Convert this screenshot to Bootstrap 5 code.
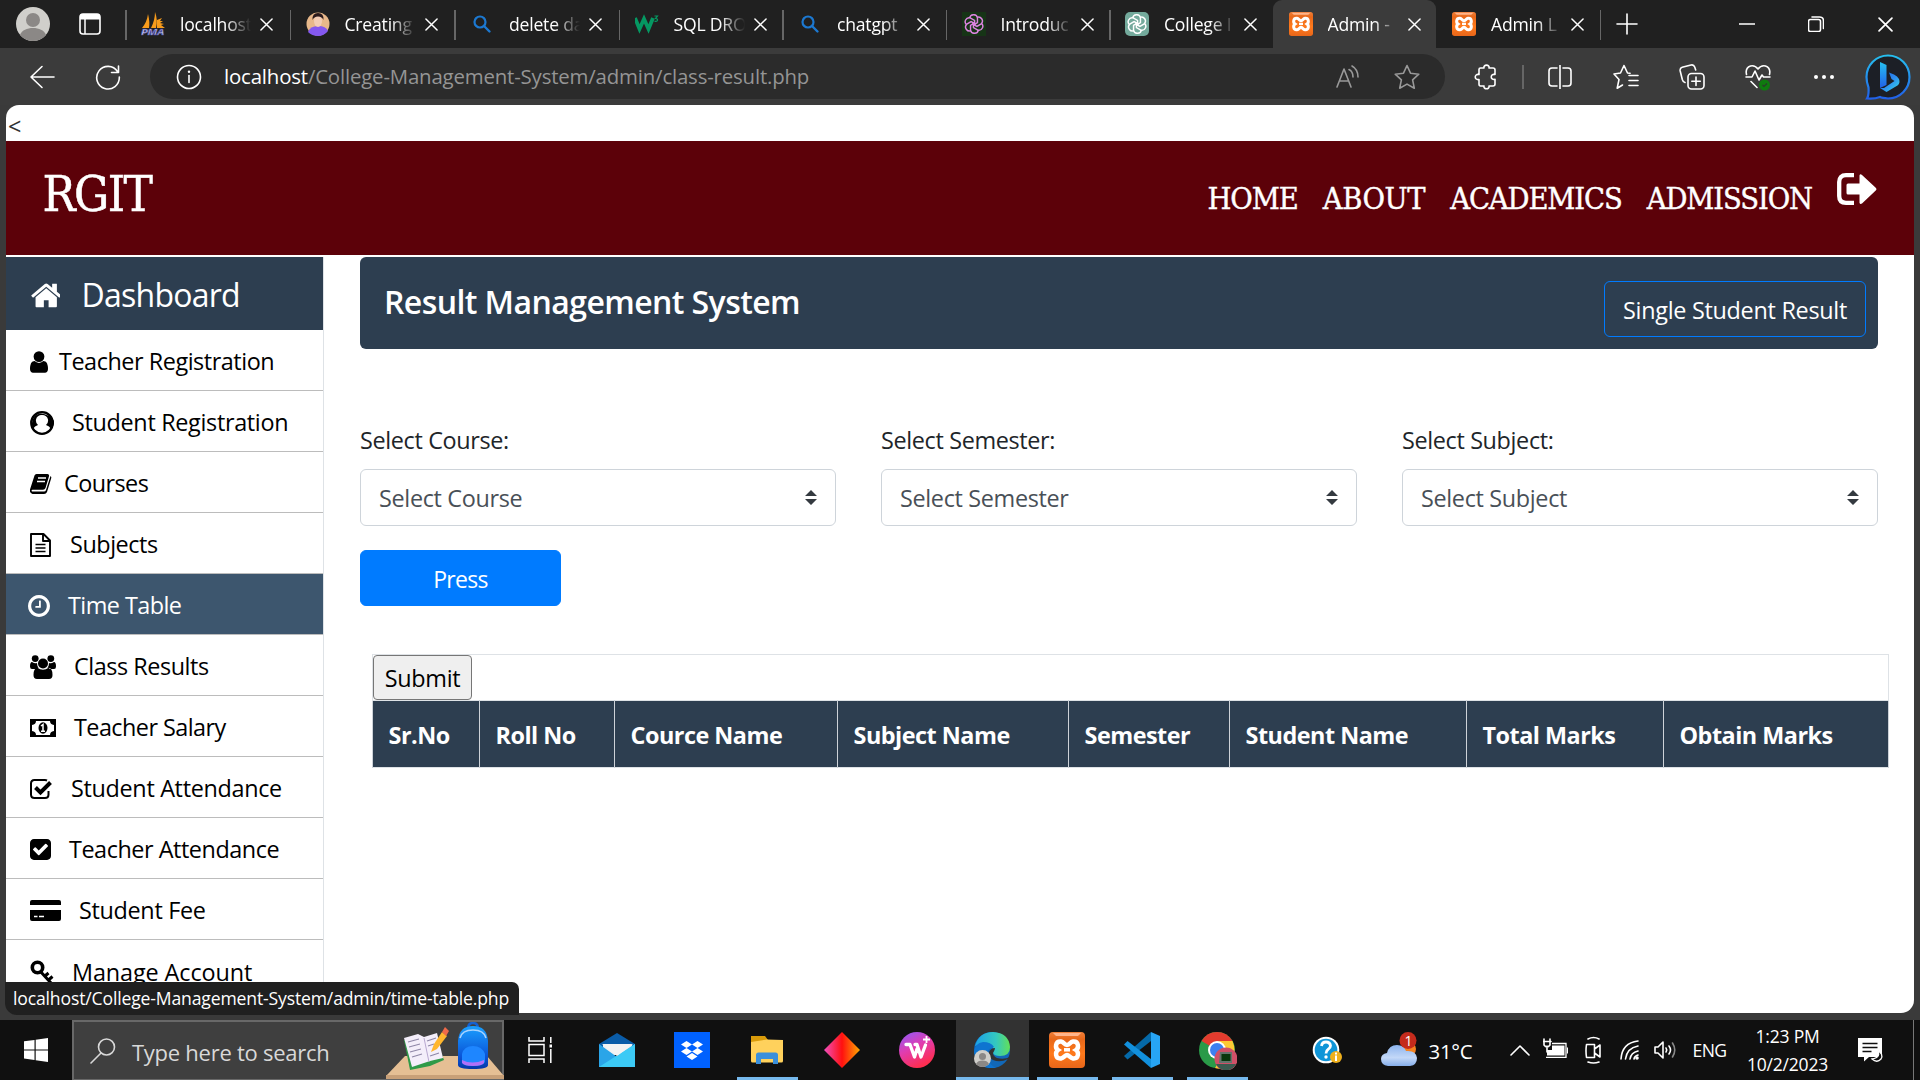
<!DOCTYPE html>
<html lang="en">
<head>
<meta charset="utf-8">
<title>Admin - Class Result</title>
<link href="https://cdn.jsdelivr.net/npm/bootstrap@5.3.0/dist/css/bootstrap.min.css" rel="stylesheet">
<style>
  :root { --navy: #2d3e50; --maroon: #5c0109; }
  body { width: 1920px; height: 1080px; overflow: hidden; background: #3a3a3a; color: #212529;
         font-family: "Open Sans", "Noto Sans", sans-serif; font-size: 23.4px; line-height: 1.5; }
  :where(body *) { letter-spacing: -.012em; }
  svg { display: block; flex: none; }
  .ln { fill: none; stroke: currentColor; stroke-width: 1.6; stroke-linecap: round; stroke-linejoin: round; }

  /* browser tabs */
  .tab-strip { height: 48px; background: #202020; color: #fff; font-size: 17.6px; }
  .strip-start { width: 125px; flex: none; padding-left: 16px; gap: 29px; }
  .web-tab { width: 163.5px; flex: none; height: 48px; padding-left: 16px; position: relative; }
  .web-tab.wide { width: 164.5px; }
  .web-tab.new-tab { width: 113px; }
  .web-tab::before { content: ""; position: absolute; left: 0; top: 10px; width: 1.5px; height: 30px; background: #666; }
  .web-tab.active::before, .web-tab.after-active::before { display: none; }
  .web-tab.active { background: #3b3b3b; border-radius: 9px 9px 0 0; }
  .tab-title { width: 79px; flex: none; margin-left: 15px; margin-right: 1px; white-space: nowrap; line-height: 24px; margin-top: -1px;
               -webkit-mask-image: linear-gradient(90deg, #000 58%, transparent 90%); mask-image: linear-gradient(90deg, #000 58%, transparent 90%); }
  .win-ctl { width: 69px; flex: none; }

  /* toolbar */
  .tool-bar { height: 57px; background: #3b3b3b; color: #fff; }
  .tool-start { width: 150px; padding: 0 29px; }
  .tool-slot { width: 66px; }
  .address { width: 1295px; height: 45px; border-radius: 23px; background: #2b2b2b; font-size: 20.4px; padding-left: 26px; padding-right: 25px; }
  .url-text { color: #959595; margin-left: 22px; }
  .url-text, .url-text span { letter-spacing: -.17px; }

  /* page */
  .viewport { height: 908px; margin: 0 6px; border-radius: 13px; }
  .stray { height: 36px; padding-left: 2px; line-height: 42px; color: #333; }
  .site-head { height: 114px; background: var(--maroon); color: #fff; margin-bottom: 2px; padding: 0 37px 0 36.5px;
               font-family: "DejaVu Serif Condensed", "DejaVu Serif", serif; font-stretch: condensed; }
  .site-brand { font-size: 49px; letter-spacing: -1.6px; line-height: 107px; -webkit-text-stroke: .5px #fff; }
  .site-nav { font-size: 30.5px; line-height: 116px; gap: 25px; }
  .site-nav a { color: #fff; text-decoration: none; letter-spacing: -1.1px; -webkit-text-stroke: .4px #fff; }
  .site-nav .nav-loose { letter-spacing: -.4px; }

  .side { width: 318px; border-right: 1px solid #dee2e6; }
  .side-head { height: 73px; background: var(--navy); color: #fff; font-size: 32px; letter-spacing: -.75px; padding: 3px 0 0 23.5px; }
  .side-item { height: 61px; border: 0; border-bottom: 1.3px solid #bcbcbc; border-radius: 0; padding: 4px 0 0 24px; color: #000; white-space: nowrap; letter-spacing: -.45px; }
  .side-item svg { margin-top: -1px; }
  .side-item.current { background: #3d566e; color: #fff; padding-left: 22px; }
  .side-item.tight { letter-spacing: -.55px; }
  .side-item.loose { letter-spacing: -.32px; }

  .work { width: 1590px; flex: none; padding: 0 36px; }
  .title-bar { height: 92px; background: var(--navy); color: #fff; border-radius: 6px; padding: 0 12px 0 24px; margin-bottom: 72px; }
  .title-bar h4 { font-size: 32px; font-weight: 600; letter-spacing: -.58px; margin-top: 22px; line-height: 46px; }
  .btn-single { --bs-btn-color: #fff; --bs-btn-border-color: #007bff; width: 262px; height: 56px; margin-top: 24px; padding: 4px 0 0; font-size: 23.4px; border-radius: 6px; }
  .pick-row { --bs-gutter-x: 45px; }
  .pick-row .form-label { margin-bottom: 11px; padding-top: 1px; line-height: 36px; display: block; font-size: 23.4px; letter-spacing: -.35px; }
  .pick-row .form-select { height: 57px; font-size: 23.4px; color: #495057; border: 1px solid #ced4da; border-radius: 6px; padding: 2px 18px 0; letter-spacing: -.33px;
     background: #fff url("data:image/svg+xml,%3Csvg xmlns='http://www.w3.org/2000/svg' viewBox='0 0 4 5'%3E%3Cpath fill='%23343a40' d='M2 0L0 2h4zm0 5L0 3h4z'/%3E%3C/svg%3E") no-repeat right 18px center / 12px 15px; }
  .btn-press { --bs-btn-bg: #007bff; --bs-btn-border-color: #007bff; width: 201px; height: 56px; font-size: 23px; border-radius: 6px; margin: 24px 0 48px; padding: 3px 0 0; letter-spacing: -.7px; }
  .marks { width: 1517px; margin-left: 12px; table-layout: fixed; border-color: #dee2e6; }
  .marks td { padding: 0; height: 46px; }
  .marks th { background: var(--navy); color: #fff; height: 67px; padding: 4px 0 0 15.5px; font-weight: 700; vertical-align: middle; border-color: #cdd2d8; white-space: nowrap; letter-spacing: -.5px; }
  .btn-submit { width: 99px; height: 45px; border: 1.5px solid #767676; border-radius: 4px; background: #efefef; color: #000; padding: 3px 0 0; line-height: 1; display: block; }

  .link-hint { position: absolute; left: 5px; top: 981.5px; width: 514px; height: 33px; background: #202020; color: #fff; letter-spacing: -.16px;
               border-radius: 0 7px 0 12px; font-size: 17.6px; line-height: 33px; padding-left: 8px; white-space: nowrap; }

  /* taskbar */
  .task-bar { position: absolute; left: 0; right: 0; top: 1020px; height: 60px; background: #101010; color: #fff; }
  .task-bar > * { flex: none; }
  .task-start { width: 72px; }
  .task-view { width: 72px; margin-right: 3.5px; }
  .task-slot { width: 75px; height: 60px; position: relative; }
  .task-slot.open::after { content: ""; position: absolute; left: 7px; right: 7px; bottom: 0; height: 3px; background: #76b9ed; }
  .task-slot.front { background: #323232; width: 73px; margin: 0 1px; }
  .task-slot.front::after { left: 0; right: 0; }
  .search-box { width: 432px; height: 60px; background: #3f3f3f; border: 2px solid #686868; border-bottom-width: 1px; color: #d8d8d8; font-size: 22px; padding-left: 16px; }
  .help-slot { width: 145px; margin-right: -20px; }
  .weather { font-size: 20.4px; width: 81px; padding-top: 3px; }
  .lang { font-size: 17.6px; width: 32px; letter-spacing: -.6px; }
  .clock { width: 130px; font-size: 17.5px; line-height: 28.5px; margin-left: -2px; }
</style>
</head>
<body>
<svg width="0" height="0" class="position-absolute">
  <defs>
    <linearGradient id="gOrange" x1="0" y1="0" x2="0" y2="1"><stop offset="0" stop-color="#f0803a"/><stop offset=".2" stop-color="#e8681a"/><stop offset=".6" stop-color="#ff7a1c"/><stop offset="1" stop-color="#e8661a"/></linearGradient>
    <linearGradient id="gBing" x1="0" y1="0" x2="0" y2="1"><stop offset="0" stop-color="#26c0f0"/><stop offset="1" stop-color="#2160e8"/></linearGradient>
    <linearGradient id="gBingB" x1="0" y1="0" x2="1" y2="1"><stop offset="0" stop-color="#1c60d8"/><stop offset=".5" stop-color="#2e8cf0"/><stop offset="1" stop-color="#35e0e8"/></linearGradient>
    <linearGradient id="gDia"><stop offset="0" stop-color="#f050c0"/><stop offset=".5" stop-color="#ff1010"/><stop offset="1" stop-color="#ffa800"/></linearGradient>
    <linearGradient id="gWps" x1="0" y1="0" x2=".5" y2="1"><stop offset="0" stop-color="#8a5cff"/><stop offset=".5" stop-color="#e03cb0"/><stop offset="1" stop-color="#ff2e50"/></linearGradient>
    <linearGradient id="gEdge"><stop offset="0" stop-color="#1ba0e8"/><stop offset=".6" stop-color="#34c8c0"/><stop offset="1" stop-color="#62e058"/></linearGradient>
    <linearGradient id="gCloud" x1="0" y1="0" x2="0" y2="1"><stop offset="0" stop-color="#8db4ee"/><stop offset=".6" stop-color="#c3d8f8"/><stop offset="1" stop-color="#86aeea"/></linearGradient>
    <linearGradient id="gBag" x1="0" y1="0" x2="0" y2="1"><stop offset="0" stop-color="#1aa0ff"/><stop offset=".7" stop-color="#0a55d8"/><stop offset="1" stop-color="#0638a8"/></linearGradient>
    <symbol id="xampp" viewBox="0 0 36 36"><rect width="36" height="36" rx="4" fill="url(#gOrange)"/><path d="M4 1h28l-3 3H7z" fill="#ffb48a"/><path d="M12 9.500C6 9 6 16 9 18c-3 2-3 9 3 8.500 3-.4 4-3.500 6-3.500s3 3.100 6 3.500c6 .5 6-6.500 3-8.500 3-2 3-9-3-8.500-3 .4-3 3.500-6 3.500s-3-3.100-6-3.500z" fill="none" stroke="#fff" stroke-width="4.500"/><path d="M15 17.800h6" stroke="#fff" stroke-width="3.500"/></symbol>
    <symbol id="person" viewBox="0 0 34 34"><circle cx="17" cy="17" r="17" fill="#d0cfcb"/><circle cx="17" cy="13" r="7" fill="#8b8886"/><path d="M4 28c2-5 7-7 13-7s11 2 13 7c-7 8-19 8-26 0z" fill="#8b8886"/></symbol>
    <symbol id="x-close" viewBox="0 0 14 14"><path d="M1 1l12 12M13 1L1 13" class="ln"/></symbol>
    <symbol id="lens" viewBox="0 0 24 24"><circle cx="10" cy="10" r="5.500" fill="none" stroke="#1c78d0" stroke-width="2.200"/><path d="M14.500 14.500l5 5" stroke="#1c78d0" stroke-width="2.400" stroke-linecap="round"/></symbol>
    <symbol id="knot" viewBox="-11 -11 22 22"><g fill="none" stroke="currentColor" stroke-width="1.600"><path id="petal" d="M-4.800-6.400a4.400 4.400 0 0 1 8.600-.6v5.500L-.8 1.400"/><use href="#petal" transform="rotate(60)"/><use href="#petal" transform="rotate(120)"/><use href="#petal" transform="rotate(180)"/><use href="#petal" transform="rotate(240)"/><use href="#petal" transform="rotate(300)"/></g></symbol>
  </defs>
</svg>

<div class="tab-strip d-flex align-items-center">
  <div class="strip-start d-flex align-items-center">
    <svg width="34" height="34"><use href="#person"/></svg>
    <svg width="22" height="22" viewBox="0 0 22 22"><rect x="1" y="1" width="20" height="20" rx="3" fill="none" stroke="#fff" stroke-width="1.600"/><path d="M1 4q0-3 3-3h14q3 0 3 3v2.500H1z" fill="#fff"/><path d="M6 6v15" stroke="#fff" stroke-width="1.500"/></svg>
  </div>
  <div class="web-tab wide d-flex align-items-center">
    <svg width="24" height="24" viewBox="0 0 24 24"><path d="M1 16Q6 10 7 2q2 8 1 14zM10 16q4-8 4-16 3 8 1 16zM16 16V8l5-2-2 3h3l-3 2 4 1-3 1 4 3z" fill="#f89c1c"/><text x="0" y="23" font-size="9.500" font-weight="700" font-style="italic" fill="#dfe0ff" stroke="#4a4aa0" stroke-width=".6" textLength="23" lengthAdjust="spacingAndGlyphs">PMA</text></svg>
    <span class="tab-title">localhost</span><svg width="13" height="13"><use href="#x-close"/></svg>
  </div>
  <div class="web-tab wide d-flex align-items-center">
    <svg width="24" height="24" viewBox="0 0 24 24"><circle cx="12" cy="12" r="11.500" fill="#e8b88a"/><path d="M2 20q2-6 10-6t10 5q-4 5-10 5t-10-4z" fill="#8458f0"/><ellipse cx="12" cy="9" rx="4" ry="6" fill="#f3cdb5"/><path d="M6.500 8Q6 1 12 1t5.500 7Q16 4.500 12 4.500T6.500 8z" fill="#2a1a1c"/></svg>
    <span class="tab-title">Creating</span><svg width="13" height="13"><use href="#x-close"/></svg>
  </div>
  <div class="web-tab wide d-flex align-items-center">
    <svg width="24" height="24"><use href="#lens"/></svg>
    <span class="tab-title">delete da</span><svg width="13" height="13"><use href="#x-close"/></svg>
  </div>
  <div class="web-tab d-flex align-items-center">
    <svg width="24" height="24" viewBox="0 0 24 24"><path d="M0 6l4.500 11L9 7l4.500 10L18 6" fill="none" stroke="#059862" stroke-width="3.800"/><path d="M19.500 4h3l-2 2.500q2.300 0 2 1.700t-3 1" fill="none" stroke="#059862" stroke-width="1.200"/></svg>
    <span class="tab-title">SQL DRO</span><svg width="13" height="13"><use href="#x-close"/></svg>
  </div>
  <div class="web-tab d-flex align-items-center">
    <svg width="24" height="24"><use href="#lens"/></svg>
    <span class="tab-title">chatgpt</span><svg width="13" height="13"><use href="#x-close"/></svg>
  </div>
  <div class="web-tab d-flex align-items-center">
    <svg width="24" height="24" viewBox="0 0 24 24" color="#dc84e0"><path d="M0 0h24v24H0z" fill="#163416"/><use href="#knot" x="2" y="2" width="20" height="20"/></svg>
    <span class="tab-title">Introduc</span><svg width="13" height="13"><use href="#x-close"/></svg>
  </div>
  <div class="web-tab d-flex align-items-center">
    <svg width="24" height="24" viewBox="0 0 24 24" color="#fff"><rect width="24" height="24" rx="5" fill="#74aa9c"/><use href="#knot" x="2" y="2" width="20" height="20"/></svg>
    <span class="tab-title">College I</span><svg width="13" height="13"><use href="#x-close"/></svg>
  </div>
  <div class="web-tab active d-flex align-items-center">
    <svg width="24" height="24"><use href="#xampp"/></svg>
    <span class="tab-title">Admin -</span><svg width="13" height="13"><use href="#x-close"/></svg>
  </div>
  <div class="web-tab after-active d-flex align-items-center">
    <svg width="24" height="24"><use href="#xampp"/></svg>
    <span class="tab-title">Admin L</span><svg width="13" height="13"><use href="#x-close"/></svg>
  </div>
  <div class="web-tab new-tab d-flex align-items-center">
    <svg width="22" height="22" viewBox="0 0 22 22"><path d="M11 1v20M1 11h20" class="ln"/></svg>
  </div>
  <div class="win-ctl d-flex justify-content-center"><svg width="16" height="16" viewBox="0 0 16 16"><path d="M.5 8h15" class="ln"/></svg></div>
  <div class="win-ctl d-flex justify-content-center"><svg width="16" height="16" viewBox="0 0 16 16"><path d="M2.500 3.500h8q2 0 2 2v8q0 2-2 2h-8q-2 0-2-2v-8q0-2 2-2zM4 1h7.500q4 0 4 4v7.500" class="ln" stroke-width="1.300"/></svg></div>
  <div class="win-ctl d-flex justify-content-center"><svg width="15" height="15"><use href="#x-close"/></svg></div>
</div>

<div class="tool-bar d-flex align-items-center">
  <div class="tool-start d-flex justify-content-between"><svg width="26" height="26" viewBox="0 0 26 26"><path d="M25 13H2M13 2.500L2 13l11 10.500" class="ln"/></svg>
  <svg width="26" height="26" viewBox="0 0 26 26"><path d="M22.500 7.500A11.300 11.300 0 1 0 24.300 13M23.500 2v6.500h-7" class="ln"/></svg></div>
  <div class="address d-flex align-items-center">
    <svg width="26" height="26" viewBox="0 0 26 26"><circle cx="13" cy="13" r="11.500" class="ln"/><path d="M13 11.500v7" class="ln"/><circle cx="13" cy="7.800" r="1.200" fill="#fff"/></svg>
    <div class="url-text flex-fill"><span class="text-white">localhost</span>/College-Management-System/admin/class-result.php</div>
    <svg width="26" height="26" viewBox="0 0 26 26" color="#999" style="margin-right:33px"><path d="M2 23L9 5l7 18M4.500 17h9" class="ln"/><path d="M14 5.500q4 2 4 7.500M17 2q6 3.500 6 11" class="ln"/></svg>
    <svg width="26" height="26" viewBox="0 0 26 26" color="#999"><path d="M13 1.500l3.500 7.700 8.300 1-6.200 5.700 1.700 8.300-7.300-4.100-7.300 4.100 1.700-8.300L1.200 10.200l8.300-1z" class="ln"/></svg>
  </div>
  <div class="tool-slot d-flex justify-content-center ms-2"><svg width="24" height="26" viewBox="0 0 24 26"><path d="M5 5.500q0-1.500 1.500-1.500H10c-1-3.800 6-3.800 5 0h4q2 0 2 2v4.500c-5-1.200-5 6 0 4.800V20q0 2-2 2h-4c1 3.700-6 3.700-5 0H6.500Q5 22 5 20v-4.500c-5 1-5-6 0-5z" class="ln"/></svg></div>
  <div style="width:1.5px;height:24px;margin:0 3px;background:#666"></div>
  <div class="tool-slot d-flex justify-content-center"><svg width="24" height="24" viewBox="0 0 24 24"><path d="M12 0v24M9 3H4Q1 3 1 6v12q0 3 3 3h5M15 3h5q3 0 3 3v12q0 3-3 3h-5" class="ln"/></svg></div>
  <div class="tool-slot d-flex justify-content-center"><svg width="26" height="26" viewBox="0 0 26 26"><path d="M17 9.300l-2.500-.3L11 1.500 7.500 9 1 10l5 5.500-1.800 8.700L9.500 21M16 11.500h9M16 16.500h9M16 21.500h9" class="ln"/></svg></div>
  <div class="tool-slot d-flex justify-content-center"><svg width="26" height="26" viewBox="0 0 26 26"><rect x="9" y="9.500" width="16" height="15.500" rx="3.500" class="ln"/><path d="M17 13v8.500M12.800 17.200h8.500M6 18.500Q4 18 3.300 15.500L1.200 7q-.6-3 2-3.800L12 1q2.800-.6 3.700 2l1 3" class="ln"/></svg></div>
  <div class="tool-slot d-flex justify-content-center"><svg width="26" height="28" viewBox="0 0 26 28"><path d="M1.500 11.500Q0 5 5.500 3 10 2 13 6q3-4 7.500-3Q26 5 24.500 11.500M1 14h6l3-6 4 9 3-5 1.500 2H25M6 18.500l6 6" class="ln"/><circle cx="19.500" cy="22" r="5.500" fill="#0f7b0f"/><path d="M17.500 22l1.500 1.500 3-3" fill="none" stroke="#2b3b2b" stroke-width="1.200"/></svg></div>
  <div class="tool-slot d-flex justify-content-center"><svg width="22" height="6" viewBox="0 0 22 6"><g fill="#fff"><circle cx="3" cy="3" r="2"/><circle cx="11" cy="3" r="2"/><circle cx="19" cy="3" r="2"/></g></svg></div>
  <div class="d-flex justify-content-center flex-fill pe-1"><svg width="46" height="46" viewBox="0 0 46 46" class="ms-1"><path d="M1.500 23A21.500 21.500 0 1 1 23 44.500q-6-.5-8-1.500-5 2-13 1.500 2-3 1.500-11Q1.500 28 1.500 23z" fill="#1c1f26" stroke="url(#gBing)" stroke-width="2.200"/><path d="M15 8l6.500 3v20l-6.500 3z" fill="url(#gBing)"/><path d="M15 34l6.500 4 11-6.500q3-2.500 1.500-6.500-1.500-3-5-4.500l-5-2 2.500 6.500 3 2L19 34z" fill="url(#gBingB)"/></svg></div>
</div>

<main class="viewport bg-white overflow-hidden">
  <div class="stray">&lt;</div>
  <header class="site-head d-flex justify-content-between">
    <div class="site-brand">RGIT</div>
    <nav class="site-nav d-flex">
      <a href="#">HOME</a><a href="#" class="nav-loose">ABOUT</a><a href="#">ACADEMICS</a><a href="#">ADMISSION</a>
      <svg width="40" height="32" viewBox="0 0 40 32" style="margin-top:32px"><path d="M17 2.200H9Q2.200 2.200 2.200 9v14q0 6.800 6.800 6.800h8" fill="none" stroke="#fff" stroke-width="4.300"/><path d="M9.500 12q0-1.500 1.500-1.500h11.500V2.500q.5-2 2.500-.6L39 15q1 1.200 0 2.200L25 30.500q-2 1.200-2.500-.8V21.500H11q-1.500 0-1.500-1.500z" fill="#fff"/></svg>
    </nav>
  </header>

  <div class="d-flex">
    <aside class="side flex-shrink-0">
      <div class="side-head d-flex align-items-center"><svg width="30" height="30" viewBox="20 60 1620 1620" style="margin-right:22px"><path fill="currentColor" d="M1472 992v480q0 26-19 45t-45 19h-384v-384h-256v384h-384q-26 0-45-19t-19-45v-480q0-1 .5-3t.5-3l575-474 575 474q1 2 1 6zm223-69l-62 74q-8 9-21 11h-3q-13 0-21-7l-692-577-692 577q-12 8-24 7-13-2-21-11l-62-74q-8-10-7-23.500t11-21.500l719-599q32-26 76-26t76 26l244 204v-195q0-14 9-23t23-9h192q14 0 23 9t9 23v408l219 182q10 8 11 21.500t-7 23.500z"/></svg>Dashboard</div>
      <div class="list-group list-group-flush">
        <a href="#" class="side-item list-group-item d-flex align-items-center"><svg width="18" height="22" viewBox="256 128 1280 1536" style="margin-right:11px"><path fill="currentColor" d="M1536 1399q0 109-62.500 187t-150.500 78h-854q-88 0-150.500-78t-62.500-187q0-85 8.500-160.500t31.500-152 58.500-131 94-89 134.500-34.500q131 128 313 128t313-128q76 0 134.500 34.500t94 89 58.500 131 31.500 152 8.500 160.500zm-256-887q0 159-112.500 271.500t-271.500 112.500-271.500-112.500-112.500-271.500 112.500-271.500 271.500-112.500 271.500 112.500 112.500 271.500z"/></svg>Teacher Registration</a>
        <a href="#" class="side-item loose list-group-item d-flex align-items-center"><svg width="24" height="24" viewBox="0 0 24 24" style="margin-right:18px"><circle cx="12" cy="12" r="10.800" fill="none" stroke="#000" stroke-width="2.200"/><path d="M3 18Q0 10 5 5t14 0 2 13q-1.500-3-5-4 2.500-2 2-5.500Q17 4 12 4T6 8.500Q5.500 12 8 14q-3.500 1-5 4z" fill="#000"/><circle cx="12" cy="9.300" r="4.800" fill="#fff"/></svg>Student Registration</a>
        <a href="#" class="side-item tight list-group-item d-flex align-items-center"><svg width="22" height="22" viewBox="0 0 22 22" style="margin-right:12px"><path d="M6.500 1h11q2 .3 1.500 2.200L15.500 15q-.6 1.700-2.500 1.700H2.500Q1 17 2 18.500h12q1.500 0 2-1.500L20.500 3q1.200.8.700 2.200L17 19q-.8 2-3 2H2.500Q-.5 20-.2 17L4.500 2.500Q5 1 6.500 1z" fill="#000"/><path d="M8 5h8M7 8.500h8" stroke="#fff" stroke-width="1.300"/></svg>Courses</a>
        <a href="#" class="side-item list-group-item d-flex align-items-center"><svg width="22" height="24" viewBox="0 0 22 24" style="margin-right:18px"><path d="M1 1h12.500L20 7.500V23H1zM13 1v7h7" fill="none" stroke="#000" stroke-width="1.900" stroke-linejoin="round"/><path d="M5.500 11.500h10M5.500 15h10M5.500 18.500h10" stroke="#000" stroke-width="1.500"/></svg>Subjects</a>
        <a href="#" class="side-item current tight list-group-item d-flex align-items-center"><svg width="22" height="22" viewBox="128 128 1536 1536" style="margin-right:18px"><path fill="currentColor" d="M1024 544v448q0 14-9 23t-23 9h-320q-14 0-23-9t-9-23v-64q0-14 9-23t23-9h224v-352q0-14 9-23t23-9h64q14 0 23 9t9 23zm416 352q0-148-73-273t-198-198-273-73-273 73-198 198-73 273 73 273 198 198 273 73 273-73 198-198 73-273zm224 0q0 209-103 385.500t-279.500 279.500-385.500 103-385.500-103-279.500-279.500-103-385.500 103-385.500 279.500-279.500 385.500-103 385.500 103 279.500 279.500 103 385.500z"/></svg>Time Table</a>
        <a href="#" class="side-item list-group-item d-flex align-items-center"><svg width="26" height="24" viewBox="0 0 26 24" style="margin-right:18px"><circle cx="5.200" cy="3.600" r="3.400"/><circle cx="20.800" cy="3.600" r="3.400"/><circle cx="13" cy="8.500" r="5"/><path d="M0 11.500Q0 7 2 7q3 2 5 1 0 3 1.500 4.500Q7 13 6 14H2Q0 14 0 11.500zM26 11.500Q26 7 24 7q-3 2-5 1 0 3-1.500 4.500Q19 13 20 14h4q2 0 2-2.500zM3.500 20q0-7 4-7.200 2.500 2 5.500 2t5.500-2q4 .2 4 7.200 0 4-3.500 4H7q-3.500 0-3.500-4z"/></svg>Class Results</a>
        <a href="#" class="side-item tight list-group-item d-flex align-items-center"><svg width="26" height="18" viewBox="0 0 26 18" style="margin-right:18px"><path fill-rule="evenodd" d="M0 0h26v18H0zM6 2q0 3.500-4 4v6q4 .5 4 4h14q0-3.500 4-4V6q-4-.5-4-4z"/><ellipse cx="13" cy="9" rx="4.500" ry="5.700"/><path d="M11 7l2-1.500V12M11 12.300h4" fill="none" stroke="#fff" stroke-width="1.500"/></svg>Teacher Salary</a>
        <a href="#" class="side-item loose list-group-item d-flex align-items-center"><svg width="23" height="20" viewBox="0 0 23 20" style="margin-right:18px"><path d="M18.500 12v3.500q0 3.500-3.500 3.500H4.500Q1 19 1 15.500v-11Q1 1 4.500 1H15q1 0 2 .5" fill="none" stroke="#000" stroke-width="2"/><path d="M5.500 8.500l5 5L20.500 3.500" fill="none" stroke="#000" stroke-width="4"/></svg>Student Attendance</a>
        <a href="#" class="side-item list-group-item d-flex align-items-center"><svg width="21" height="21" viewBox="128 128 1536 1536" style="margin-right:18px"><path fill="currentColor" d="M813 1299l614-614q19-19 19-45t-19-45l-102-102q-19-19-45-19t-45 19l-467 467-211-211q-19-19-45-19t-45 19l-102 102q-19 19-19 45t19 45l358 358q19 19 45 19t45-19zm851-883v960q0 119-84.500 203.500t-203.500 84.500h-960q-119 0-203.500-84.500t-84.500-203.500v-960q0-119 84.500-203.500t203.500-84.500h960q119 0 203.500 84.500t84.500 203.500z"/></svg>Teacher Attendance</a>
        <a href="#" class="side-item loose list-group-item d-flex align-items-center"><svg width="31" height="21" viewBox="0 0 31 21" style="margin-right:18px"><path d="M2 0h27q2 0 2 2v3H0V2q0-2 2-2zM0 10h31v9q0 2-2 2H2q-2 0-2-2z"/><path d="M4 16.500h3.500M9 16.500h5" stroke="#fff" stroke-width="1.600"/></svg>Student Fee</a>
        <a href="#" class="side-item list-group-item d-flex align-items-center" style="letter-spacing:-.1px"><svg width="24" height="24" viewBox="0 0 24 24" style="margin-right:18px"><circle cx="7.500" cy="7.500" r="5.200" fill="none" stroke="#000" stroke-width="3.600"/><path d="M10 11l11 12M15 16l3.500-3M18.500 20l4-3.500" fill="none" stroke="#000" stroke-width="3"/></svg>Manage Account</a>
      </div>
    </aside>

    <section class="work">
      <div class="title-bar d-flex justify-content-between align-items-start">
        <h4 class="mb-0">Result Management System</h4>
        <button class="btn btn-single">Single Student Result</button>
      </div>
      <div class="row pick-row">
        <div class="col-4"><label class="form-label">Select Course:</label><select class="form-select"><option>Select Course</option></select></div>
        <div class="col-4"><label class="form-label">Select Semester:</label><select class="form-select"><option>Select Semester</option></select></div>
        <div class="col-4"><label class="form-label">Select Subject:</label><select class="form-select"><option>Select Subject</option></select></div>
      </div>
      <button class="btn btn-primary btn-press d-block">Press</button>
      <table class="table table-bordered marks mb-0">
        <colgroup><col style="width:107px"><col style="width:135px"><col style="width:223px"><col style="width:231px"><col style="width:161px"><col style="width:237px"><col style="width:197px"><col></colgroup>
        <tbody>
          <tr><td colspan="8"><button class="btn-submit">Submit</button></td></tr>
          <tr><th>Sr.No</th><th>Roll No</th><th>Cource Name</th><th>Subject Name</th><th>Semester</th><th>Student Name</th><th>Total Marks</th><th>Obtain Marks</th></tr>
        </tbody>
      </table>
    </section>
  </div>
</main>

<div class="link-hint">localhost/College-Management-System/admin/time-table.php</div>

<footer class="task-bar d-flex align-items-center">
  <div class="task-start d-flex justify-content-center"><svg width="24" height="24" viewBox="0 0 24 24" fill="#fff"><path d="M0 3.300L10.500 2v9.500H0zM11.700 1.800L24 0v11.500H11.700zM0 12.600h10.500V22L0 20.600zM11.700 12.600H24V24l-12.300-1.800z"/></svg></div>
  <div class="search-box d-flex align-items-center">
    <svg width="26" height="26" viewBox="0 0 26 26"><circle cx="16.500" cy="9" r="8" class="ln"/><path d="M11 15L1 25" class="ln"/></svg>
    <span class="flex-fill" style="margin-left:16px;padding-top:3px">Type here to search</span>
    <svg width="118" height="57" viewBox="386 1022 118 57" style="margin-right:-2px"><path d="M405 1056l-19 20v4h118v-4l-17-20z" fill="#e5bf94"/><path d="M386 1075h118v5H386z" fill="#c8a078"/>
      <path d="M404 1040l6 30 20-4 14-6-8-20z" fill="#2f9a48"/><path d="M404 1038l14-4 6 3 13-4 6 25-13 3-18 6z" fill="#f4eefa"/><path d="M424 1038l5 24" stroke="#b8a8d0"/><path d="M408 1042l11-3M409 1047l11-3M410 1052l11-3M412 1057l10-3M427 1041l9-3M428 1046l6-2M430 1056l9-3" stroke="#9088a8" stroke-width="1.200"/><path d="M431 1052l3-8 8-12 5 4-10 13z" fill="#ffb62e"/><path d="M442 1032l3-5 4 4-3 5z" fill="#ef6a4a"/>
      <path d="M468 1029q0-6 5-6t5 6" fill="none" stroke="#1560d0" stroke-width="2.500"/><path d="M458 1065v-24q1-15 15-15t15 15v24q0 4-15 4t-15-4z" fill="url(#gBag)"/><path d="M462 1062v-8q2-8 11-8t12 8v8q-2 4-12 4t-11-4z" fill="#1e86ff"/><path d="M462 1060q10 5 22 0v3q-2 3-11 3t-11-3z" fill="#b070f8"/><path d="M460 1038q2-8 13-8t13 8" fill="none" stroke="#a8d4ff" stroke-width="1.600"/></svg>
  </div>
  <div class="task-view d-flex justify-content-center"><svg width="24" height="28" viewBox="0 0 24 28"><path d="M1 1v4h15V1M1 8.500h15v11H1zM1 27v-4h15v4M22.800 1v6M22.800 13v14" fill="none" stroke="#fff" stroke-width="1.500"/><path d="M21.500 8.500H24v3h-2.500z" fill="#fff"/></svg></div>
  <div class="task-slot d-flex align-items-center justify-content-center"><svg width="36" height="36" viewBox="0 0 36 36"><path d="M0 12L18 1l18 11v6H0z" fill="#0a5ca8"/><path d="M4 13h29v10H4z" fill="#eef0f2"/><path d="M0 12l18 13L36 12v23H0z" fill="#2aa5e8"/><path d="M0 35l36-23v23z" fill="#3ccaf5"/><path d="M3 12h31L18 24z" fill="#f3f3f3"/></svg></div>
  <div class="task-slot d-flex align-items-center justify-content-center"><svg width="36" height="36" viewBox="0 0 36 36"><path d="M0 0h36v36H0z" fill="#0061fe"/><path fill="#fff" d="M12.500 9l5.500 3.500-5.500 3.500L7 12.500zM23.500 9l5.500 3.500-5.500 3.500-5.500-3.500zM12.500 16l5.500 3.500-5.500 3.500L7 19.500zM23.500 16l5.500 3.500-5.500 3.500-5.500-3.500zM18 21l5.500 3.500L18 28l-5.500-3.500z"/></svg></div>
  <div class="task-slot open d-flex align-items-center justify-content-center"><svg width="34" height="30" viewBox="0 0 34 30"><path d="M1 1h14l3 4v3H1z" fill="#d99b0a"/><path d="M1 7l16-2.500 16 .5v21q0 1.500-1.500 1.500h-29Q1 27.500 1 26z" fill="#ffd15c"/><path d="M6 29V20q0-2.500 2.500-2.500h17Q28 17.500 28 20v9h-5v-5H11v5z" fill="#3b8fdb"/></svg></div>
  <div class="task-slot d-flex align-items-center justify-content-center"><svg width="36" height="36" viewBox="0 0 36 36"><path d="M18 0l18 18-18 18L0 18z" fill="url(#gDia)"/></svg></div>
  <div class="task-slot d-flex align-items-center justify-content-center"><svg width="36" height="36" viewBox="0 0 36 36"><circle cx="18" cy="18" r="18" fill="url(#gWps)"/><path d="M7 12.500h4l4.500 12.500L18 17M16 12.500h2l4 12.500 4.500-12" fill="none" stroke="#fff" stroke-width="3.300" stroke-linejoin="round" stroke-linecap="round"/><path d="M27.500 4v7M24 7.500h7" stroke="#fff" stroke-width="1.800"/></svg></div>
  <div class="task-slot open front d-flex align-items-center justify-content-center"><svg width="36" height="36" viewBox="0 0 36 36"><circle cx="18" cy="18" r="18" fill="#1268b8"/><path d="M1 14Q5 0 19 0q16 1 17 15 0 9-10 9-6 0-7-3 2-6-3-8-9-2-15 1z" fill="url(#gEdge)"/><path d="M0 20q1-9 9-10 8 0 11 5-7 1-7 9 1 8 9 12Q3 38 0 20z" fill="#0e74d0"/><path d="M36 25q-6 3-13 1-4-2-4-5 2-3 2-5-4 0-6 4-1 5 4 8 7 3 15-1z" fill="#323232"/><use href="#person" x="0" y="18" width="17" height="17"/></svg></div>
  <div class="task-slot open d-flex align-items-center justify-content-center"><svg width="36" height="36"><use href="#xampp"/></svg></div>
  <div class="task-slot open d-flex align-items-center justify-content-center"><svg width="36" height="36" viewBox="0 0 36 36"><path d="M0 24l3.500 3.500L27 9V0z" fill="#0569a8"/><path d="M0 12.500L3.500 9Q27 27 27 27v9z" fill="#1290dd"/><path d="M27 0l9 4v28l-9 4z" fill="#27a5f5"/></svg></div>
  <div class="task-slot open d-flex align-items-center justify-content-center"><svg width="40" height="40" viewBox="-2 -2 40 40"><circle cx="18" cy="18" r="18" fill="#2a9a48"/><path d="M18 18L2.500 9Q8 0 18 0t15.500 9z" fill="#e33b2e"/><path d="M18 9h15.500q5 12-2.500 21T16 36l9-14z" fill="#fcc934"/><circle cx="18" cy="18" r="9" fill="#fff"/><circle cx="18" cy="18" r="7" fill="#3d7ff0"/><circle cx="27" cy="27" r="11.500" fill="#cf5068"/><path d="M17 32h20q-3 6-10 6.500-7-.5-10-6.500z" fill="#3b5a50"/><path d="M21 20h12v11H20z" fill="#63736c"/><path d="M22.500 22h9v7h-9z" fill="#07360c"/></svg></div>

  <div class="help-slot d-flex justify-content-center"><svg width="32" height="32" viewBox="0 0 32 32"><circle cx="15" cy="16" r="13.300" fill="#fff"/><circle cx="15" cy="16" r="11.300" fill="#0f95d8"/><path d="M10.500 12q.5-4 4.500-4t4.500 3.800Q19.500 14 17 15.500q-2 1.300-2 4" fill="none" stroke="#fff" stroke-width="2.800"/><circle cx="15" cy="23" r="1.700" fill="#fff"/><circle cx="25" cy="23" r="6" fill="#efb01c"/><path d="M25 21.500V27M25 18.500v2" stroke="#fff" stroke-width="2"/></svg></div>
  <svg width="40" height="36" viewBox="0 0 40 36" class="ms-n1" style="margin-right:9px"><circle cx="29" cy="17" r="7" fill="#f58220"/><path d="M8 34q-7-1-7-7 0-5 6-6Q9 13 17 13q7 0 9 6 10-1 11 7 0 7-7 8z" fill="url(#gCloud)"/><circle cx="28" cy="8.500" r="8.500" fill="#c42b1c"/><text x="24.500" y="13.500" font-size="14" fill="#fff">1</text></svg>
  <span class="weather">31°C</span>
  <svg width="20" height="12" viewBox="0 0 20 12" style="margin-right:13px"><path d="M1 11l9-9 9 9" class="ln"/></svg>
  <svg width="25" height="20" viewBox="0 0 25 20" style="margin-right:17px;margin-top:-4px"><path d="M1 1v6q3 4 6 0V1M0 3.500h8M4 8v6" class="ln" stroke-width="1.300"/><path d="M4 17.500V12h5V7.500h12.500v10z" fill="#fff"/><path d="M9 5.500h14v14H3" fill="none" stroke="#fff" stroke-width="1.300"/><path d="M24.500 9.500v6" stroke="#fff"/></svg>
  <svg width="17" height="28" viewBox="0 0 17 28" style="margin-right:18px"><path d="M1.500 8.500h8v13h-8q-1-6.500 0-13zM9.500 13l5.500-4v12l-5.500-4M3 3q5.500-3 11 0M3 26q5.500 2 11 0" class="ln" stroke-width="1.400"/></svg>
  <svg width="20" height="20" viewBox="0 0 20 20" style="margin-right:14px"><path d="M1 19Q2 3 18 1M5.500 19Q7 8 18 6M10 19q1-6.500 8-8M14 19q.5-3 4-4" class="ln" stroke-width="1.300"/><circle cx="17" cy="18" r="1.800" fill="#fff"/></svg>
  <svg width="23" height="20" viewBox="0 0 23 20" style="margin-right:16px"><path d="M1 7v6h3l5 5V2L4 7zM12 8q1.500 2 0 4M15 6q3 4 0 8" class="ln" stroke-width="1.300"/><path d="M18.500 3q4.500 7 0 14" class="ln" stroke-width="1" opacity=".5"/></svg>
  <span class="lang">ENG</span>
  <div class="clock text-center">1:23 PM<br>10/2/2023</div>
  <svg width="26" height="26" viewBox="0 0 26 26" style="margin-left:5px;margin-top:-1px"><path d="M0 1h24v19H11l-5 4.500V20H0z" fill="#fff"/><path d="M4.500 6.500h15M4.500 10.500h15M4.500 14.500h9" stroke="#101010" stroke-width="1.500"/><path d="M19 13q5 7-5 9 5 4.500 9 0 3-5-4-9z" fill="#101010" stroke="#fff" stroke-width="1.300"/></svg>
  <div class="ms-auto" style="width:1.5px;height:60px;background:#777;margin-right:6px"></div>
</footer>
<script src="https://cdn.jsdelivr.net/npm/bootstrap@5.3.0/dist/js/bootstrap.bundle.min.js"></script>
</body>
</html>
